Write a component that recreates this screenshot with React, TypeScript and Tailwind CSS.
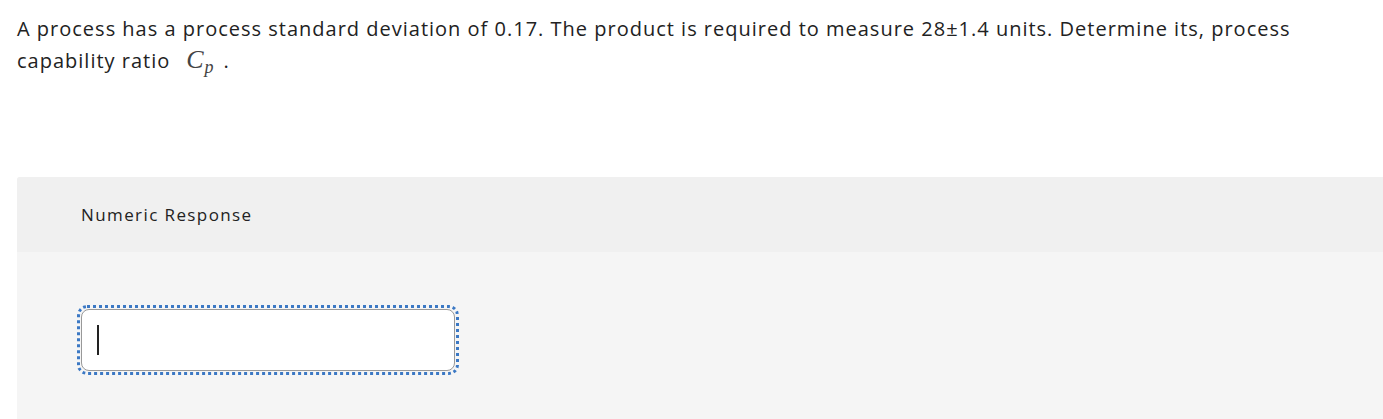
export default function App() {
  return (
    <div className="h-[419px] w-[1383px] overflow-hidden bg-white font-['Open_Sans',sans-serif] text-[#222]">
      <div className="w-[1330px] px-[17px] pt-[13px] text-[20px] leading-[32px] tracking-[1px]">
        A process has a process standard deviation of 0.17. The product is required to measure 28±1.4 units. Determine its, process capability ratio
        <span className="ml-[16px] font-['Liberation_Serif',serif] text-[26px] leading-[20px] italic tracking-normal text-[#444]">
          C<sub className="ml-[1px] text-[18px]">p</sub>
        </span>
        <span className="ml-[10px]">.</span>
      </div>

      <div className="ml-[17px] mt-[100px] h-[300px] rounded-tl-[3px] bg-[#f5f5f5]">
        <div className="flex h-[75px] items-center rounded-tl-[3px] bg-[#f0f0f0] pl-[64px] text-[17px] tracking-[1.4px] text-[#222]">
          Numeric Response
        </div>
        <div className="pl-[60px] pt-[53px]">
          <div className="w-[382px] rounded-[10px] border-[3px] border-dotted border-[#3b78c4] p-[1px]">
            <div className="flex h-[62px] items-center rounded-[8px] border border-[#999] bg-white pl-[15px]">
              <div className="h-[30px] w-[2px] bg-[#222]" />
            </div>
          </div>
        </div>
      </div>
    </div>
  );
}
